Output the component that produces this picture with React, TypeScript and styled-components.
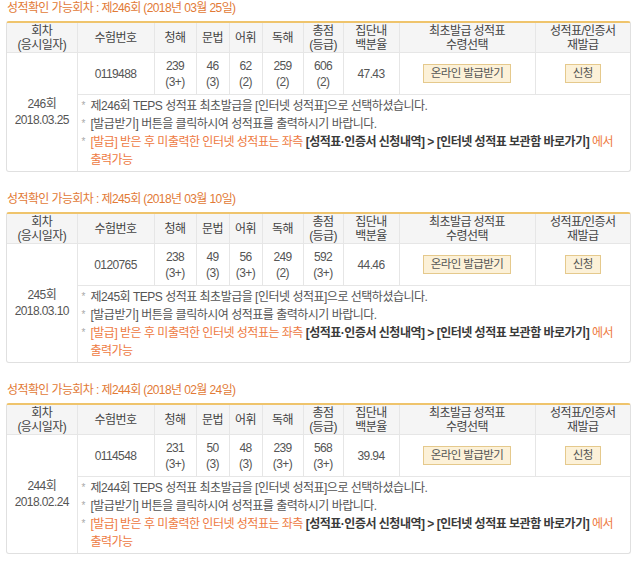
import React from 'react';
import styled, { createGlobalStyle } from 'styled-components';

const GlobalStyle = createGlobalStyle`
  html, body { margin: 0; padding: 0; background: #fff; }
  body {
    font-family: "Liberation Sans", "Noto Sans CJK KR", sans-serif;
    color: #555;
  }
`;

const Page = styled.div`
  display: flex;
  flex-direction: column;
  gap: 19px;
  padding: 0 8px 0 6px;
`;

const Section = styled.section`
  display: flex;
  flex-direction: column;
  gap: 5px;
`;

const Title = styled.div`
  font-size: 12px;
  line-height: 16px;
  color: #e27a36;
  letter-spacing: -0.6px;
  padding-left: 1px;
`;

const TableBox = styled.div`
  width: 623px;
  border: 1px solid #e0e0e0;
  border-top: 2px solid #efc46c;
  border-radius: 3px;
  overflow: hidden;
`;

const Table = styled.table`
  width: 100%;
  table-layout: fixed;
  border-collapse: collapse;
  border-style: hidden;
  font-size: 12px;
  letter-spacing: -0.6px;
`;

const Th = styled.th`
  height: 29px;
  padding: 0;
  background: #f5f5f5;
  color: #444;
  font-weight: normal;
  line-height: 14px;
  text-align: center;
  border: 1px solid #e6e6e6;
`;

const Td = styled.td`
  height: 41px;
  padding: 0;
  line-height: 16px;
  text-align: center;
  color: #555;
  border: 1px solid #e6e6e6;
`;

const NotesCell = styled.td`
  padding: 2px 6px 2px 4px;
  text-align: left;
  border: 1px solid #e6e6e6;
  line-height: 18px;
`;

const Note = styled.div<{ $accent?: boolean }>`
  display: flex;
  gap: 3px;
  letter-spacing: -0.5px;
  color: ${(p) => (p.$accent ? '#ee7a42' : '#555')};
`;

const Bullet = styled.span`
  flex: none;
  width: 6px;
  color: #aaa;
  font-size: 10px;
`;

const Strong = styled.b`
  color: #3a3a3a;
  font-weight: bold;
`;

const Button = styled.span`
  display: inline-block;
  padding: 1px 7px;
  line-height: 15px;
  font-size: 11.5px;
  color: #555;
  background: #fcf1d8;
  border: 1px solid #e5c98c;
`;

type Exam = {
  no: number;
  titleDate: string;
  date: string;
  id: string;
  scores: [string, string][];
  pct: string;
};

const exams: Exam[] = [
  {
    no: 246,
    titleDate: '2018년 03월 25일',
    date: '2018.03.25',
    id: '0119488',
    scores: [['239', '3+'], ['46', '3'], ['62', '2'], ['259', '2'], ['606', '2']],
    pct: '47.43',
  },
  {
    no: 245,
    titleDate: '2018년 03월 10일',
    date: '2018.03.10',
    id: '0120765',
    scores: [['238', '3+'], ['49', '3'], ['56', '3+'], ['249', '2'], ['592', '3+']],
    pct: '44.46',
  },
  {
    no: 244,
    titleDate: '2018년 02월 24일',
    date: '2018.02.24',
    id: '0114548',
    scores: [['231', '3+'], ['50', '3'], ['48', '3'], ['239', '3+'], ['568', '3+']],
    pct: '39.94',
  },
];

const widths = [70, 77, 42, 33, 33, 41, 40, 56, 136, 95];

function ExamTable({ e }: { e: Exam }) {
  return (
    <Section>
      <Title>
        성적확인 가능회차 : 제{e.no}회 ({e.titleDate})
      </Title>
      <TableBox>
        <Table>
          <colgroup>
            {widths.map((w, i) => (
              <col key={i} style={{ width: w }} />
            ))}
          </colgroup>
          <thead>
            <tr>
              <Th>
                회차
                <br />
                (응시일자)
              </Th>
              <Th>수험번호</Th>
              <Th>청해</Th>
              <Th>문법</Th>
              <Th>어휘</Th>
              <Th>독해</Th>
              <Th>
                총점
                <br />
                (등급)
              </Th>
              <Th>
                집단내
                <br />
                백분율
              </Th>
              <Th>
                최초발급 성적표
                <br />
                수령선택
              </Th>
              <Th>
                성적표/인증서
                <br />
                재발급
              </Th>
            </tr>
          </thead>
          <tbody>
            <tr>
              <Td rowSpan={2}>
                {e.no}회
                <br />
                {e.date}
              </Td>
              <Td>{e.id}</Td>
              {e.scores.map(([s, g], i) => (
                <Td key={i}>
                  {s}
                  <br />({g})
                </Td>
              ))}
              <Td>{e.pct}</Td>
              <Td>
                <Button>온라인 발급받기</Button>
              </Td>
              <Td>
                <Button>신청</Button>
              </Td>
            </tr>
            <tr>
              <NotesCell colSpan={9}>
                <Note>
                  <Bullet>*</Bullet>
                  <span>제{e.no}회 TEPS 성적표 최초발급을 [인터넷 성적표]으로 선택하셨습니다.</span>
                </Note>
                <Note>
                  <Bullet>*</Bullet>
                  <span>[발급받기] 버튼을 클릭하시여 성적표를 출력하시기 바랍니다.</span>
                </Note>
                <Note $accent>
                  <Bullet>*</Bullet>
                  <span>
                    [발급] 받은 후 미출력한 인터넷 성적표는 좌측{' '}
                    <Strong>[성적표·인증서 신청내역] &gt; [인터넷 성적표 보관함 바로가기]</Strong> 에서
                    <br />
                    출력가능
                  </span>
                </Note>
              </NotesCell>
            </tr>
          </tbody>
        </Table>
      </TableBox>
    </Section>
  );
}

export default function App() {
  return (
    <>
      <GlobalStyle />
      <Page>
        {exams.map((e) => (
          <ExamTable key={e.no} e={e} />
        ))}
      </Page>
    </>
  );
}
